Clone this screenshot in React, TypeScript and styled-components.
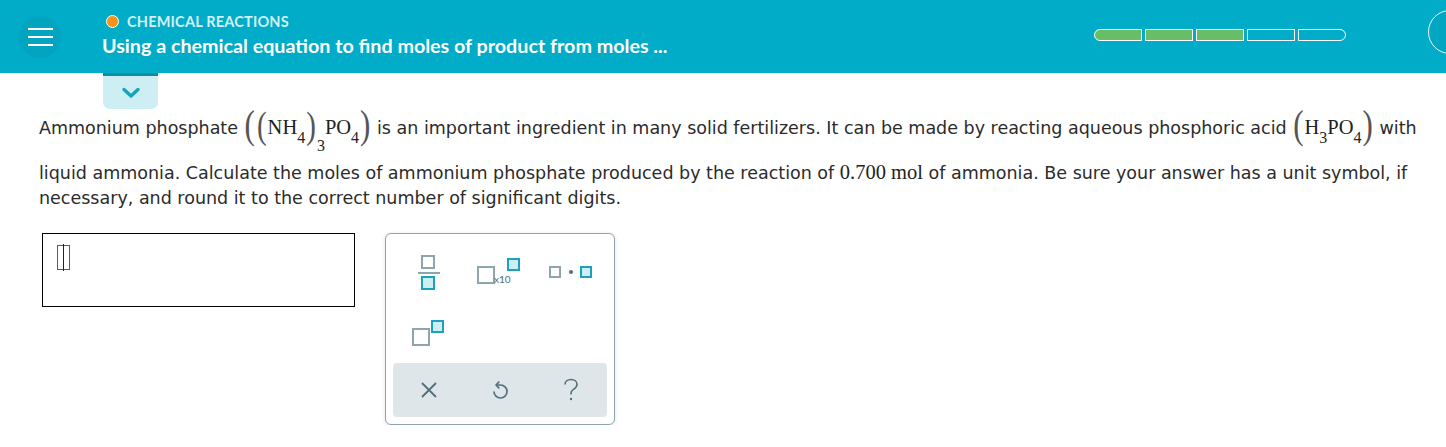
import * as React from 'react';
import styled, { createGlobalStyle } from 'styled-components';

const GlobalStyle = createGlobalStyle`
  html, body {
    margin: 0;
    padding: 0;
    background: #ffffff;
  }
  body {
    font-family: 'DejaVu Sans', Verdana, sans-serif;
    color: #2b2b2b;
    overflow: hidden;
  }
`;

const teal = '#00acc8';
const keyGray = '#8fa5ad';
const keyTeal = '#1aa3bb';
const keyFill = '#cdeef3';

const Header = styled.header`
  align-items: center;
  background-color: ${teal};
  display: flex;
  height: 73px;
  overflow: hidden;
  position: relative;
`;

const MenuButton = styled.button`
  all: unset;
  align-items: center;
  background-color: #03a4bf;
  border-radius: 50%;
  display: flex;
  flex-direction: column;
  gap: 6px;
  height: 42px;
  justify-content: center;
  margin-left: 19px;
  width: 42px;

  span {
    background: #ffffff;
    display: block;
    height: 2px;
    width: 25px;
  }
`;

const TitleBlock = styled.div`
  display: flex;
  flex-direction: column;
  gap: 4px;
  margin-left: 41px;
  margin-top: -3px;
`;

const Category = styled.div`
  align-items: center;
  color: #d3f1f6;
  display: flex;
  font-family: 'Lato', sans-serif;
  font-size: 14.5px;
  font-weight: 700;
  gap: 8px;
  letter-spacing: 0.2px;
  margin-left: 4px;

  &::before {
    background: #f7931e;
    border: 1px solid #ffffff;
    border-radius: 50%;
    content: '';
    display: block;
    height: 11px;
    width: 11px;
  }
`;

const Title = styled.div`
  color: #ffffff;
  font-family: 'Lato', sans-serif;
  font-size: 19.7px;
  font-weight: 700;
`;

const Progress = styled.div`
  display: flex;
  gap: 3px;
  margin-left: auto;
  margin-right: 100px;
  margin-top: -3px;
`;

const Segment = styled.div<{ $done: boolean; $pos: 'first' | 'mid' | 'last' }>`
  background-color: ${({ $done }) => ($done ? '#68bd68' : 'transparent')};
  border: 1.5px solid #ffffff;
  border-radius: ${({ $pos }) =>
    $pos === 'first' ? '6px 0 0 6px' : $pos === 'last' ? '0 6px 6px 0' : '0'};
  box-sizing: border-box;
  height: 12px;
  width: 48px;
`;

const TimerRing = styled.div`
  background-color: #02a6c1;
  border: 1.5px solid #e6f7fa;
  border-radius: 50%;
  height: 42px;
  position: absolute;
  right: -26px;
  top: 10px;
  width: 42px;
`;

const Tab = styled.button`
  all: unset;
  align-items: center;
  background-color: #cdeef3;
  border-radius: 0 0 7px 7px;
  border-top: 3px solid #0a8fa5;
  box-sizing: border-box;
  display: flex;
  height: 36px;
  justify-content: center;
  margin-left: 103px;
  padding-top: 1px;
  width: 55px;
`;

const Main = styled.main`
  padding: 0 0 0 39px;
`;

const Question = styled.p`
  font-size: 17.5px;
  line-height: 25px;
  margin: -2px 0 0;
  width: 1400px;
`;

const FirstLine = styled.span`
  display: inline-block;
  height: 53px;
  line-height: 40px;
  white-space: nowrap;
`;

const Math = styled.span`
  color: #222222;
  display: inline-block;
  font-family: 'Liberation Serif', 'Times New Roman', serif;
  font-size: 20.5px;
  vertical-align: baseline;
`;

const Paren = styled.span<{ $big?: boolean }>`
  color: #555555;
  display: inline-block;
  font-family: 'Liberation Serif', serif;
  font-size: ${({ $big }) => ($big ? '31px' : '29px')};
  margin: 0 1px;
  transform: scaleY(1.3);
  transform-origin: 50% 65%;
  vertical-align: -3px;
`;

const Sub = styled.sub<{ $deep?: boolean }>`
  font-size: 16px;
  line-height: 0;
  position: relative;
  top: ${({ $deep }) => ($deep ? '1.05em' : '0.55em')};
  vertical-align: baseline;
`;

const AnswerRow = styled.div`
  align-items: flex-start;
  display: flex;
  gap: 30px;
  margin-top: 22px;
  padding-left: 3px;
`;

const AnswerBox = styled.div`
  border: 1px solid #000000;
  box-sizing: border-box;
  height: 74px;
  padding: 11px 0 0 14px;
  width: 313px;
`;

const Caret = styled.div`
  border: 1px solid #4a4af0;
  box-sizing: border-box;
  height: 25px;
  position: relative;
  width: 13px;

  &::after {
    background: #222222;
    content: '';
    height: 27px;
    left: 5px;
    position: absolute;
    top: -2px;
    width: 1px;
  }
`;

const Keypad = styled.div`
  background: #ffffff;
  border: 1px solid ${keyGray};
  border-radius: 6px;
  box-shadow: 0 1px 4px rgba(0, 0, 0, 0.12);
  box-sizing: border-box;
  display: flex;
  flex-direction: column;
  height: 192px;
  padding: 7px;
  width: 230px;
`;

const KeyGrid = styled.div`
  display: grid;
  grid-auto-rows: 61px;
  grid-template-columns: repeat(3, 1fr);
`;

const Key = styled.button`
  all: unset;
  align-items: center;
  display: flex;
  justify-content: center;
`;

const ActionBar = styled.div`
  background-color: #dfe6e9;
  border-radius: 4px;
  display: grid;
  grid-template-columns: repeat(3, 1fr);
  height: 55px;
  margin-top: auto;
`;

const Action = styled.button`
  all: unset;
  align-items: center;
  color: #50707c;
  display: flex;
  justify-content: center;
`;

const Box = ({ x, y, s, on }: { x: number; y: number; s: number; on?: boolean }) => (
  <rect
    x={x}
    y={y}
    width={s}
    height={s}
    fill={on ? keyFill : '#ffffff'}
    stroke={on ? keyTeal : keyGray}
    strokeWidth={2}
  />
);

export default function App() {
  const segments = [true, true, true, false, false];
  return (
    <>
      <GlobalStyle />
      <Header>
        <MenuButton aria-label="menu">
          <span />
          <span />
          <span />
        </MenuButton>
        <TitleBlock>
          <Category>CHEMICAL REACTIONS</Category>
          <Title>Using a chemical equation to find moles of product from moles ...</Title>
        </TitleBlock>
        <Progress>
          {segments.map((done, i) => (
            <Segment
              key={i}
              $done={done}
              $pos={i === 0 ? 'first' : i === segments.length - 1 ? 'last' : 'mid'}
            />
          ))}
        </Progress>
        <TimerRing />
      </Header>
      <Tab aria-label="expand">
        <svg width="20" height="14" viewBox="0 0 20 14">
          <path d="M3 3.5l7 6.5 7-6.5" fill="none" stroke="#14a5bd" strokeWidth="3.4" strokeLinecap="round" strokeLinejoin="round" />
        </svg>
      </Tab>
      <Main>
        <Question>
          <FirstLine>
            Ammonium phosphate{' '}
            <Math>
              <Paren $big>(</Paren>
              <Paren>(</Paren>NH<Sub>4</Sub>
              <Paren>)</Paren>
              <Sub $deep>3</Sub>PO<Sub>4</Sub>
              <Paren $big>)</Paren>
            </Math>{' '}
            is an important ingredient in many solid fertilizers. It can be made by reacting aqueous phosphoric acid{' '}
            <Math>
              <Paren $big>(</Paren>H<Sub>3</Sub>PO<Sub>4</Sub>
              <Paren $big>)</Paren>
            </Math>{' '}
            with
          </FirstLine>
          <br />
          liquid ammonia. Calculate the moles of ammonium phosphate produced by the reaction of{' '}
          <Math>0.700 mol</Math> of ammonia. Be sure your answer has a unit symbol, if necessary, and round it to the correct number of significant digits.
        </Question>
        <AnswerRow>
          <AnswerBox>
            <Caret />
          </AnswerBox>
          <Keypad>
            <KeyGrid>
              <Key aria-label="fraction">
                <svg width="26" height="38" viewBox="0 0 26 38">
                  <Box x={6} y={3} s={12} />
                  <rect x={2} y={19} width={22} height={2} fill={keyGray} />
                  <Box x={6} y={24} s={12} on />
                </svg>
              </Key>
              <Key aria-label="scientific notation">
                <svg width="50" height="30" viewBox="0 0 50 30">
                  <Box x={3} y={10} s={16} />
                  <text x={19} y={26} fontSize="10" fontFamily="Lato, sans-serif" fill="#50707c">x10</text>
                  <Box x={33} y={2} s={11} on />
                </svg>
              </Key>
              <Key aria-label="multiply">
                <svg width="46" height="16" viewBox="0 0 46 16">
                  <Box x={2} y={3} s={10} />
                  <circle cx={23} cy={8} r={2} fill="#50707c" />
                  <Box x={33} y={3} s={10} on />
                </svg>
              </Key>
              <Key aria-label="superscript">
                <svg width="36" height="30" viewBox="0 0 36 30">
                  <Box x={2} y={11} s={16} />
                  <Box x={21} y={3} s={11} on />
                </svg>
              </Key>
            </KeyGrid>
            <ActionBar>
              <Action aria-label="clear">
                <svg width="18" height="18" viewBox="0 0 18 18">
                  <path d="M2 2l14 14M16 2L2 16" stroke="currentColor" strokeWidth="1.8" />
                </svg>
              </Action>
              <Action aria-label="undo">
                <svg width="18" height="20" viewBox="0 0 18 20">
                  <path d="M6 5H9.5A6.5 6.5 0 1 1 3 11.5" fill="none" stroke="currentColor" strokeWidth="1.7" />
                  <path d="M7.8 2.2L5 5l2.8 2.8" fill="none" stroke="currentColor" strokeWidth="1.7" strokeLinejoin="round" strokeLinecap="round" />
                </svg>
              </Action>
              <Action aria-label="help">
                <svg width="16" height="24" viewBox="0 0 16 24">
                  <path d="M2 6.5C2 3.5 4.5 1.5 8 1.5s6 2 6 5c0 2.5-1.5 3.5-3.5 4.8C8.8 12.4 8 13.5 8 15.5v1" fill="none" stroke="currentColor" strokeWidth="1.6" />
                  <circle cx={8} cy={21} r={1.2} fill="currentColor" />
                </svg>
              </Action>
            </ActionBar>
          </Keypad>
        </AnswerRow>
      </Main>
    </>
  );
}
